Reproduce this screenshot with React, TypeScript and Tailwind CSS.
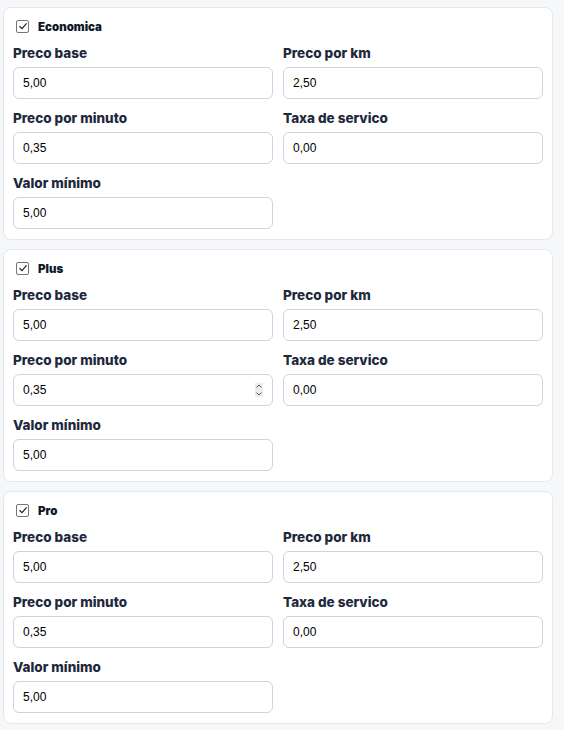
import React from 'react';

type Field = { label: string; value: string; spinner?: boolean };

const Spinner: React.FC = () => (
  <svg className="absolute right-[10px] top-1/2 -translate-y-1/2" width="8" height="15" viewBox="0 0 8 15" fill="none">
    <rect x="0" y="0" width="8" height="15" fill="#ededed" />
    <path d="M1.5 5 L4 2.5 L6.5 5" stroke="#555" strokeWidth="1" />
    <path d="M1.5 10 L4 12.5 L6.5 10" stroke="#555" strokeWidth="1" />
  </svg>
);

const Input: React.FC<{ field: Field }> = ({ field }) => (
  <div className="flex flex-col">
    <label className="font-['Inter',sans-serif] text-[13.5px] leading-[18px] font-extrabold text-[#1e293b] mb-[5px]">{field.label}</label>
    <div className="relative">
      <input
        readOnly
        value={field.value}
        className="w-full h-[32px] rounded-[6px] border border-[#cbd5e1] bg-white px-[9px] text-[12px] text-black outline-none"
      />
      {field.spinner && <Spinner />}
    </div>
  </div>
);

const Card: React.FC<{ title: string; spin?: boolean }> = ({ title, spin }) => {
  const fields: Field[] = [
    { label: 'Preco base', value: '5,00' },
    { label: 'Preco por km', value: '2,50' },
    { label: 'Preco por minuto', value: '0,35', spinner: spin },
    { label: 'Taxa de servico', value: '0,00' },
    { label: 'Valor mínimo', value: '5,00' },
  ];
  return (
    <div className="bg-white border border-[#e2e8f0] rounded-[8px] px-[9px] pt-[10px] pb-[10px]">
      <div className="flex items-center h-[16px] pl-[3px] gap-[9px]">
        <span className="w-[13px] h-[13px] border border-[#767676] rounded-[2px] bg-white flex items-center justify-center">
          <svg width="10" height="10" viewBox="0 0 10 10" fill="none">
            <path d="M1.5 5.2 L4 7.6 L8.6 2.4" stroke="#222" strokeWidth="1.2" />
          </svg>
        </span>
        <span className="font-['Inter',sans-serif] text-[11.5px] leading-[16px] font-black text-[#0f172a] mt-[2px]">{title}</span>
      </div>
      <div className="grid grid-cols-2 gap-x-[10px] gap-y-[10px] mt-[10px]">
        {fields.map((f) => (
          <Input key={f.label} field={f} />
        ))}
      </div>
    </div>
  );
};

const App: React.FC = () => {
  return (
    <div className="min-h-[730px] bg-[#f6f7f9] pt-[7px] pl-[3px] pr-[11px] flex flex-col gap-[9px]" style={{ fontFamily: '"Liberation Sans", Arial, sans-serif' }}>
      <Card title="Economica" />
      <Card title="Plus" spin />
      <Card title="Pro" />
    </div>
  );
};

export default App;
